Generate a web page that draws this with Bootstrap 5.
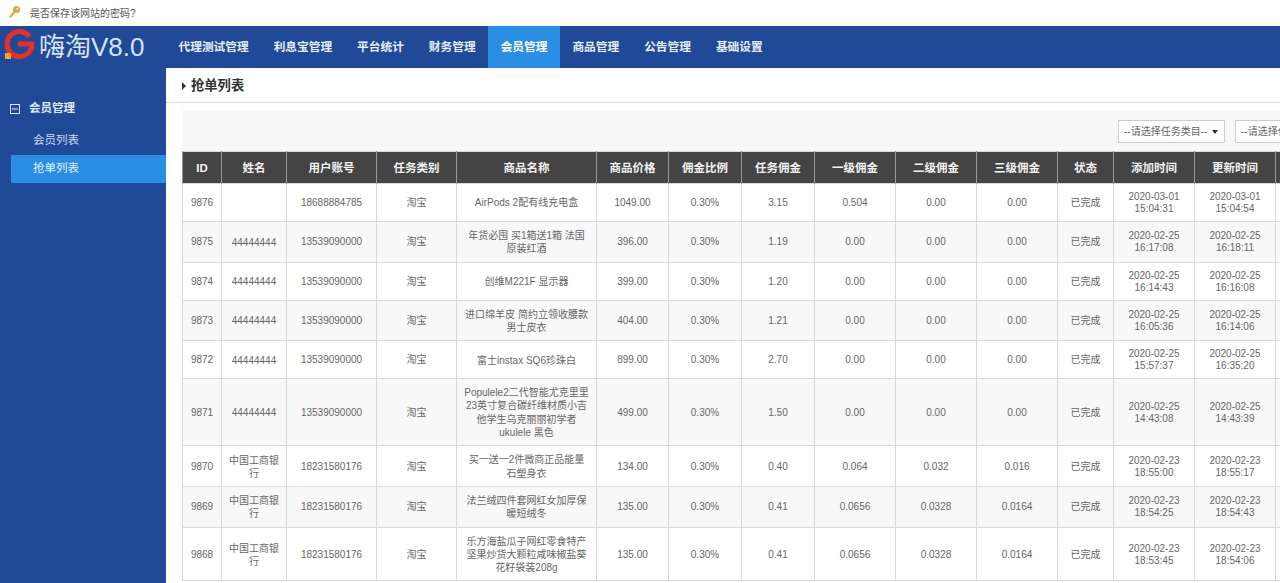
<!DOCTYPE html>
<html lang="zh">
<head>
  <meta charset="UTF-8" />
  <title>嗨淘V8.0</title>
  <meta name="viewport" content="width=device-width, initial-scale=1" />
  <link href="https://cdn.jsdelivr.net/npm/bootstrap@5.3.0/dist/css/bootstrap.min.css" rel="stylesheet" />
  <style>
    html, body { height: 100%; overflow: hidden; }
    body {
      background: #fff;
      color: #666;
      font-family: "Liberation Sans", "Noto Sans CJK SC", sans-serif;
      font-size: 10px;
    }
    .save-bar { height: 26px; padding-left: 8px; gap: 10px; color: #555; background: #fefefe; }
    .top-nav { height: 42px; padding: 0; background: #204a97; flex-wrap: nowrap; justify-content: flex-start; }
    .logo-box { width: 166px; height: 42px; padding-left: 3px; gap: 3px; }
    .logo-text { font-size: 26px; line-height: 1; color: #d6e4f4; white-space: nowrap; }
    .top-nav .nav-link {
      height: 42px;
      padding: 14px 12.5px 0;
      color: #e6edf7;
      font-size: 11.7px;
      line-height: 14px;
      font-weight: 700;
    }
    .top-nav .nav-link.active { background: #2a8fe4; color: #fff; }
    .page-body { height: 515px; }
    .side-menu { width: 166px; flex: none; background: #204a97; padding-top: 32px; color: #dfe8f4; }
    .side-title { height: 18px; padding-left: 10px; gap: 9px; font-size: 11.5px; font-weight: 700; }
    .side-menu .nav-link { height: 28px; margin: 0 0 0 11px; padding: 6px 0 0 22px; color: #cfdcf0; font-size: 11.5px; line-height: 15px; }
    .side-menu .side-first { margin-top: 9px; }
    .side-menu .nav-link.active { background: #2a8fe4; color: #e8f2fc; }
    .main-area { min-width: 0; overflow: hidden; }
    .page-head { height: 35px; padding: 2px 0 0 16px; gap: 5px; border-bottom: 1px solid #ddd; color: #333; font-size: 13.3px; font-weight: 700; }
    .head-arrow { width: 0; height: 0; border-left: 4px solid #333; border-top: 4px solid transparent; border-bottom: 4px solid transparent; }
    .filter-bar { width: 1200px; height: 41px; margin: 7px 0 0 16px; padding: 10px 0 0 936px; gap: 10px; background: #f7f7f7; }
    .filter-bar .form-select {
      width: 107px;
      height: 23px;
      flex: none;
      padding: 0 0 0 5px;
      border: 1px solid #ccc;
      border-radius: 0;
      color: #666;
      font-size: 10px;
      background-image: url("data:image/svg+xml,%3csvg xmlns='http://www.w3.org/2000/svg' viewBox='0 0 6 4'%3e%3cpath fill='%23333' d='M0 0h6L3 4z'/%3e%3c/svg%3e");
      background-size: 6px 4px;
      background-position: right 6px center;
    }
    .order-table { width: 1183px; margin: 0 0 0 16px; table-layout: fixed; border-color: #d9d9d9; color: #666; font-size: 10px; }
    .order-table > :not(caption) > * > * { padding: 7px 1px 6px; text-align: center; vertical-align: middle; line-height: 12px; color: #666; }
    .order-table > thead > tr > th {
      height: 32px;
      padding: 8px 1px;
      background: #444;
      border-color: #999;
      color: #f2f2f2;
      font-size: 11.5px;
      line-height: 14px;
    }
    .order-table > tbody > tr:nth-child(even) > td { background: #f8f8f8; }
    .order-table .cell-name { line-height: 13.3px; }
    .order-table .cell-user { line-height: 13px; }
    .c-id { width: 39px; } .c-name { width: 65px; } .c-phone { width: 90px; } .c-type { width: 80px; }
    .c-goods { width: 140px; } .c-price { width: 72px; } .c-rate { width: 73px; } .c-fee { width: 73px; }
    .c-lv { width: 81px; } .c-state { width: 56px; } .c-date { width: 81px; } .c-last { width: 90px; }
  </style>
</head>
<body>

<!-- save password prompt -->
<div class="save-bar d-flex align-items-center">
  <svg class="mb-1" width="12" height="13" viewBox="0 0 12 13"><path d="M7 6 2.500 11.500" stroke="#dfa83a" stroke-width="2.200" stroke-linecap="round"/><circle cx="8.500" cy="4.500" r="3.500" fill="#dfa83a"/><circle cx="9.300" cy="3.700" r=".9" fill="#fdf3d6"/></svg>
  <span>是否保存该网站的密码?</span>
</div>

<!-- top nav -->
<nav class="navbar top-nav">
  <div class="logo-box d-flex align-items-center">
    <svg class="mb-1" width="33" height="32" viewBox="0 0 33 32">
      <path d="M26.500 7.500A12.500 12.500 0 1 0 7.500 23.700M15 15H29A12.500 12.500 0 0 1 8 24.200" fill="none" stroke="#e4312b" stroke-width="5"/>
      <path d="M2 24h6v6H2z" fill="#f5a623"/>
    </svg>
    <span class="logo-text">嗨淘V8.0</span>
  </div>
  <ul class="nav flex-nowrap">
    <li class="nav-item"><a class="nav-link" href="#">代理测试管理</a></li>
    <li class="nav-item"><a class="nav-link" href="#">利息宝管理</a></li>
    <li class="nav-item"><a class="nav-link" href="#">平台统计</a></li>
    <li class="nav-item"><a class="nav-link" href="#">财务管理</a></li>
    <li class="nav-item"><a class="nav-link active" href="#">会员管理</a></li>
    <li class="nav-item"><a class="nav-link" href="#">商品管理</a></li>
    <li class="nav-item"><a class="nav-link" href="#">公告管理</a></li>
    <li class="nav-item"><a class="nav-link" href="#">基础设置</a></li>
  </ul>
</nav>

<div class="page-body d-flex">
  <!-- side menu -->
  <aside class="side-menu">
    <div class="side-title d-flex align-items-center">
      <svg width="10" height="10" viewBox="0 0 10 10"><rect x=".5" y=".5" width="9" height="9" fill="none" stroke="#dfe8f4"/><path d="M2 5h6" stroke="#dfe8f4"/></svg>
      <span>会员管理</span>
    </div>
    <nav class="nav flex-column">
      <a class="nav-link side-first" href="#">会员列表</a>
      <a class="nav-link active" href="#">抢单列表</a>
    </nav>
  </aside>

  <main class="main-area flex-grow-1">
    <div class="page-head d-flex align-items-center">
      <span class="head-arrow"></span>
      <span>抢单列表</span>
    </div>

    <div class="filter-bar d-flex">
      <select class="form-select"><option>--请选择任务类目--</option></select>
      <select class="form-select"><option>--请选择任务状态--</option></select>
    </div>

    <table class="table table-bordered order-table">
      <thead>
        <tr>
          <th class="c-id">ID</th><th class="c-name">姓名</th><th class="c-phone">用户账号</th><th class="c-type">任务类别</th>
          <th class="c-goods">商品名称</th><th class="c-price">商品价格</th><th class="c-rate">佣金比例</th><th class="c-fee">任务佣金</th>
          <th class="c-lv">一级佣金</th><th class="c-lv">二级佣金</th><th class="c-lv">三级佣金</th><th class="c-state">状态</th>
          <th class="c-date">添加时间</th><th class="c-date">更新时间</th><th class="c-last"></th>
        </tr>
      </thead>
      <tbody>
        <tr><td>9876</td><td class="cell-user"></td><td>18688884785</td><td>淘宝</td><td class="cell-name">AirPods 2配有线充电盒</td><td>1049.00</td><td>0.30%</td><td>3.15</td><td>0.504</td><td>0.00</td><td>0.00</td><td>已完成</td><td>2020-03-01<br>15:04:31</td><td>2020-03-01<br>15:04:54</td><td></td></tr>
        <tr><td>9875</td><td class="cell-user">44444444</td><td>13539090000</td><td>淘宝</td><td class="cell-name">年货必囤 买1箱送1箱 法国<br>原装红酒</td><td>396.00</td><td>0.30%</td><td>1.19</td><td>0.00</td><td>0.00</td><td>0.00</td><td>已完成</td><td>2020-02-25<br>16:17:08</td><td>2020-02-25<br>16:18:11</td><td></td></tr>
        <tr><td>9874</td><td class="cell-user">44444444</td><td>13539090000</td><td>淘宝</td><td class="cell-name">创维M221F 显示器</td><td>399.00</td><td>0.30%</td><td>1.20</td><td>0.00</td><td>0.00</td><td>0.00</td><td>已完成</td><td>2020-02-25<br>16:14:43</td><td>2020-02-25<br>16:16:08</td><td></td></tr>
        <tr><td>9873</td><td class="cell-user">44444444</td><td>13539090000</td><td>淘宝</td><td class="cell-name">进口绵羊皮 简约立领收腰款<br>男士皮衣</td><td>404.00</td><td>0.30%</td><td>1.21</td><td>0.00</td><td>0.00</td><td>0.00</td><td>已完成</td><td>2020-02-25<br>16:05:36</td><td>2020-02-25<br>16:14:06</td><td></td></tr>
        <tr><td>9872</td><td class="cell-user">44444444</td><td>13539090000</td><td>淘宝</td><td class="cell-name">富士instax SQ6珍珠白</td><td>899.00</td><td>0.30%</td><td>2.70</td><td>0.00</td><td>0.00</td><td>0.00</td><td>已完成</td><td>2020-02-25<br>15:57:37</td><td>2020-02-25<br>16:35:20</td><td></td></tr>
        <tr><td>9871</td><td class="cell-user">44444444</td><td>13539090000</td><td>淘宝</td><td class="cell-name">Populele2二代智能尤克里里<br>23英寸复合碳纤维材质小吉<br>他学生乌克丽丽初学者<br>ukulele 黑色</td><td>499.00</td><td>0.30%</td><td>1.50</td><td>0.00</td><td>0.00</td><td>0.00</td><td>已完成</td><td>2020-02-25<br>14:43:08</td><td>2020-02-25<br>14:43:39</td><td></td></tr>
        <tr><td>9870</td><td class="cell-user">中国工商银<br>行</td><td>18231580176</td><td>淘宝</td><td class="cell-name">买一送一2件微商正品能量<br>石塑身衣</td><td>134.00</td><td>0.30%</td><td>0.40</td><td>0.064</td><td>0.032</td><td>0.016</td><td>已完成</td><td>2020-02-23<br>18:55:00</td><td>2020-02-23<br>18:55:17</td><td></td></tr>
        <tr><td>9869</td><td class="cell-user">中国工商银<br>行</td><td>18231580176</td><td>淘宝</td><td class="cell-name">法兰绒四件套网红女加厚保<br>暖短绒冬</td><td>135.00</td><td>0.30%</td><td>0.41</td><td>0.0656</td><td>0.0328</td><td>0.0164</td><td>已完成</td><td>2020-02-23<br>18:54:25</td><td>2020-02-23<br>18:54:43</td><td></td></tr>
        <tr><td>9868</td><td class="cell-user">中国工商银<br>行</td><td>18231580176</td><td>淘宝</td><td class="cell-name">乐方海盐瓜子网红零食特产<br>坚果炒货大颗粒咸味椒盐葵<br>花籽袋装208g</td><td>135.00</td><td>0.30%</td><td>0.41</td><td>0.0656</td><td>0.0328</td><td>0.0164</td><td>已完成</td><td>2020-02-23<br>18:53:45</td><td>2020-02-23<br>18:54:06</td><td></td></tr>
      </tbody>
    </table>
  </main>
</div>

<script src="https://cdn.jsdelivr.net/npm/bootstrap@5.3.0/dist/js/bootstrap.bundle.min.js"></script>
</body>
</html>
